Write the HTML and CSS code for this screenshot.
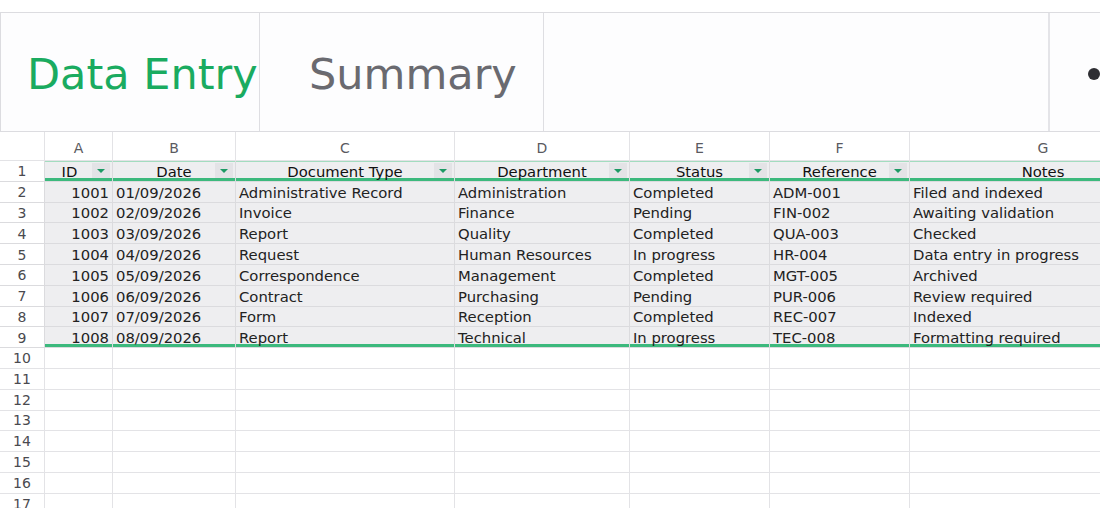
FILE: index.html
```html
<!doctype html>
<html>
  <head>
    <title>Data Entry</title>
    <link rel="stylesheet" href="styles.css">
  </head>
  <body>
    <div class="tabs">
      <div class="tab tab-first active">Data Entry</div>
      <div class="tab tab-second">Summary</div>
      <div class="tab-fill"></div>
      <div class="tab-more"><span class="dot"></span></div>
    </div>

    <div class="sheet">
      <div class="row colhead">
        <div class="num"></div>
        <div>A</div><div>B</div><div>C</div><div>D</div><div>E</div><div>F</div><div>G</div>
      </div>

      <div class="row head">
        <div class="num">1</div>
        <div class="hd hd-id">ID<span class="filter"></span></div>
        <div class="hd">Date<span class="filter"></span></div>
        <div class="hd">Document Type<span class="filter"></span></div>
        <div class="hd">Department<span class="filter"></span></div>
        <div class="hd">Status<span class="filter"></span></div>
        <div class="hd">Reference<span class="filter"></span></div>
        <div class="hd">Notes</div>
      </div>

      <div class="row data">
        <div class="num">2</div>
        <div class="r">1001</div><div>01/09/2026</div><div>Administrative Record</div><div>Administration</div><div>Completed</div><div>ADM-001</div><div>Filed and indexed</div>
      </div>
      <div class="row data">
        <div class="num">3</div>
        <div class="r">1002</div><div>02/09/2026</div><div>Invoice</div><div>Finance</div><div>Pending</div><div>FIN-002</div><div>Awaiting validation</div>
      </div>
      <div class="row data">
        <div class="num">4</div>
        <div class="r">1003</div><div>03/09/2026</div><div>Report</div><div>Quality</div><div>Completed</div><div>QUA-003</div><div>Checked</div>
      </div>
      <div class="row data">
        <div class="num">5</div>
        <div class="r">1004</div><div>04/09/2026</div><div>Request</div><div>Human Resources</div><div>In progress</div><div>HR-004</div><div>Data entry in progress</div>
      </div>
      <div class="row data">
        <div class="num">6</div>
        <div class="r">1005</div><div>05/09/2026</div><div>Correspondence</div><div>Management</div><div>Completed</div><div>MGT-005</div><div>Archived</div>
      </div>
      <div class="row data">
        <div class="num">7</div>
        <div class="r">1006</div><div>06/09/2026</div><div>Contract</div><div>Purchasing</div><div>Pending</div><div>PUR-006</div><div>Review required</div>
      </div>
      <div class="row data">
        <div class="num">8</div>
        <div class="r">1007</div><div>07/09/2026</div><div>Form</div><div>Reception</div><div>Completed</div><div>REC-007</div><div>Indexed</div>
      </div>
      <div class="row data last">
        <div class="num">9</div>
        <div class="r">1008</div><div>08/09/2026</div><div>Report</div><div>Technical</div><div>In progress</div><div>TEC-008</div><div>Formatting required</div>
      </div>

      <div class="row empty"><div class="num">10</div><div></div><div></div><div></div><div></div><div></div><div></div><div></div></div>
      <div class="row empty"><div class="num">11</div><div></div><div></div><div></div><div></div><div></div><div></div><div></div></div>
      <div class="row empty"><div class="num">12</div><div></div><div></div><div></div><div></div><div></div><div></div><div></div></div>
      <div class="row empty"><div class="num">13</div><div></div><div></div><div></div><div></div><div></div><div></div><div></div></div>
      <div class="row empty"><div class="num">14</div><div></div><div></div><div></div><div></div><div></div><div></div><div></div></div>
      <div class="row empty"><div class="num">15</div><div></div><div></div><div></div><div></div><div></div><div></div><div></div></div>
      <div class="row empty"><div class="num">16</div><div></div><div></div><div></div><div></div><div></div><div></div><div></div></div>
      <div class="row empty"><div class="num">17</div><div></div><div></div><div></div><div></div><div></div><div></div><div></div></div>
    </div>
  </body>
</html>
```

FILE: styles.css
```css
* {
  box-sizing: border-box;
}

body {
  margin: 0;
  background-color: #fff;
  font-family: "DejaVu Sans", Verdana, sans-serif;
  color: #222;
  overflow: hidden;
}

/* sheet tabs */
.tabs {
  display: flex;
  margin-top: 12px;
  height: 120px;
  background-color: #fdfdfe;
  border-top: 1px solid #dcdce0;
  border-bottom: 1px solid #dcdce0;
  border-left: 1px solid #dcdce0;
}

.tab {
  display: flex;
  align-items: center;
  padding-top: 3px;
  font-size: 43px;
  color: #6a6a70;
  border-right: 1px solid #dedee2;
}

.tab-first {
  width: 259px;
  padding-left: 26px;
}

.tab-second {
  width: 284px;
  padding-left: 49px;
}

.tab.active {
  color: #1aab60;
}

.tab-fill {
  width: 506px;
  border-right: 2px solid #e4e4e8;
}

.tab-more {
  flex: 1;
  display: flex;
  align-items: center;
  padding-left: 38px;
  padding-top: 3px;
}

.dot {
  width: 12px;
  height: 12px;
  border-radius: 50%;
  background-color: #2e2e33;
}

/* grid */
.sheet {
  width: 1100px;
  overflow: hidden;
}

.row {
  display: grid;
  grid-template-columns: 45px 68px 123px 219px 175px 140px 140px 267px;
  width: 1177px;
  height: 20.8px;
  font-size: 14.8px;
}

.row > div {
  position: relative;
  display: flex;
  align-items: center;
  padding: 0 3px;
  white-space: nowrap;
  border-right: 1px solid #e3e3e6;
  border-bottom: 1px solid #e3e3e6;
}

.row > .num {
  justify-content: center;
  font-size: 14px;
  color: #4a4a4f;
  background-color: #fff;
}

.colhead {
  height: 29px;
}

.colhead > div {
  justify-content: center;
  padding-top: 4px;
  font-size: 14px;
  color: #5a5a5f;
}

.head > div,
.data > div {
  background-color: #eeeef0;
  border-color: #dbdbde;
}

.head > div.hd {
  justify-content: center;
  padding-top: 1px;
  color: #111;
  box-shadow: inset 0 1px #a3dcbf, inset 0 -3px #3cb97d;
}

.head > .hd-id {
  padding-right: 21px;
}

.filter {
  position: absolute;
  right: 2px;
  top: 2px;
  width: 18px;
  height: 15px;
  background-color: #e3e3e6;
}

.filter::after {
  content: "";
  position: absolute;
  left: 5px;
  top: 6px;
  border-left: 4px solid transparent;
  border-right: 4px solid transparent;
  border-top: 4px solid #1d9a64;
}

.data > div {
  padding-top: 1px;
}

.data > .r {
  justify-content: flex-end;
}

.last > div:not(.num) {
  box-shadow: inset 0 -3px #3cb97d;
}
```
